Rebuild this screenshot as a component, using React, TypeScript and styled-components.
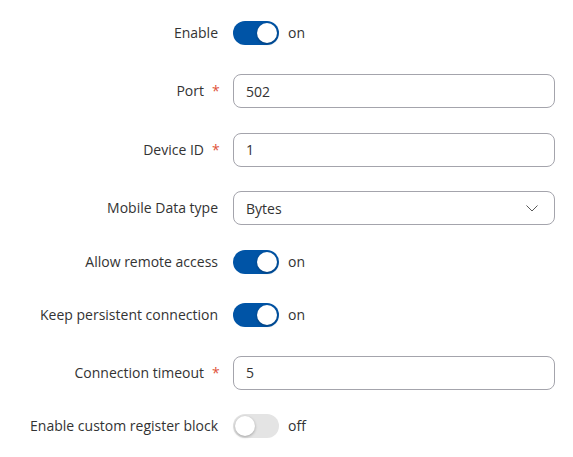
import React, { FunctionComponent } from 'react';
import styled, { createGlobalStyle } from 'styled-components';

const GlobalStyle = createGlobalStyle`
    html, body {
        margin: 0;
        padding: 0;
        background: #ffffff;
    }
    body {
        font-family: 'Open Sans', 'Noto Sans', sans-serif;
        font-size: 14px;
        color: #333333;
    }
`;

const Form = styled.div`
    display: flex;
    flex-direction: column;
    padding: 21px 18px 0 0;
`;

const Row = styled.div<{ $toggle?: boolean }>`
    display: grid;
    grid-template-columns: 218px 1fr;
    column-gap: 15px;
    align-items: center;
    margin-bottom: ${(p) => (p.$toggle ? '29px' : '24.5px')};
`;

const Label = styled.div`
    display: flex;
    justify-content: flex-end;
    align-items: center;
    gap: 8px;
    line-height: 20px;
    color: #333333;
    white-space: nowrap;
`;

const Required = styled.span`
    color: #e0533a;
    font-size: 14px;
    width: 6px;
`;

const TextInput = styled.input`
    box-sizing: border-box;
    width: 100%;
    height: 34px;
    padding: 0 12px;
    border: 1px solid #a4a4ac;
    border-radius: 8px;
    font-family: inherit;
    font-size: 14px;
    color: #333333;
    background: #ffffff;
    outline: none;
`;

const SelectBox = styled.div`
    box-sizing: border-box;
    display: flex;
    align-items: center;
    justify-content: space-between;
    width: 100%;
    height: 34px;
    padding: 0 16px 0 12px;
    border: 1px solid #a4a4ac;
    border-radius: 8px;
    color: #333333;
`;

const ToggleWrap = styled.div`
    display: flex;
    align-items: center;
    gap: 9px;
    height: 24px;
`;

const Track = styled.div<{ $on: boolean }>`
    position: relative;
    width: 46px;
    height: 24px;
    border-radius: 12px;
    background: ${(p) => (p.$on ? '#0054a6' : '#e4e4e4')};
    flex-shrink: 0;
`;

const Knob = styled.div<{ $on: boolean }>`
    position: absolute;
    top: 2px;
    left: ${(p) => (p.$on ? '24px' : '2px')};
    width: 20px;
    height: 20px;
    border-radius: 50%;
    background: #ffffff;
    box-shadow: 0 1px 3px rgba(0, 0, 0, 0.3);
`;

const ToggleText = styled.span`
    color: #333333;
    line-height: 20px;
`;

interface IToggleProps {
    on: boolean;
}

const Toggle: FunctionComponent<IToggleProps> = ({ on }) => (
    <ToggleWrap>
        <Track $on={on}>
            <Knob $on={on} />
        </Track>
        <ToggleText>{on ? 'on' : 'off'}</ToggleText>
    </ToggleWrap>
);

const Chevron = () => (
    <svg width="12" height="7" viewBox="0 0 12 7" fill="none">
        <path d="M0.75 0.75l5.25 5.25 5.25-5.25" stroke="#5a5a5a" strokeWidth="1" strokeLinecap="round" strokeLinejoin="round" />
    </svg>
);

interface IFieldLabelProps {
    text: string;
    required?: boolean;
}

const FieldLabel: FunctionComponent<IFieldLabelProps> = ({ text, required }) => (
    <Label>
        {text}
        {required && <Required>*</Required>}
    </Label>
);

export default function App() {
    return (
        <>
            <GlobalStyle />
            <Form>
                <Row $toggle>
                    <FieldLabel text="Enable" />
                    <Toggle on />
                </Row>
                <Row>
                    <FieldLabel text="Port" required />
                    <TextInput defaultValue="502" />
                </Row>
                <Row>
                    <FieldLabel text="Device ID" required />
                    <TextInput defaultValue="1" />
                </Row>
                <Row>
                    <FieldLabel text="Mobile Data type" />
                    <SelectBox>
                        <span>Bytes</span>
                        <Chevron />
                    </SelectBox>
                </Row>
                <Row $toggle>
                    <FieldLabel text="Allow remote access" />
                    <Toggle on />
                </Row>
                <Row $toggle>
                    <FieldLabel text="Keep persistent connection" />
                    <Toggle on />
                </Row>
                <Row>
                    <FieldLabel text="Connection timeout" required />
                    <TextInput defaultValue="5" />
                </Row>
                <Row $toggle>
                    <FieldLabel text="Enable custom register block" />
                    <Toggle on={false} />
                </Row>
            </Form>
        </>
    );
}
